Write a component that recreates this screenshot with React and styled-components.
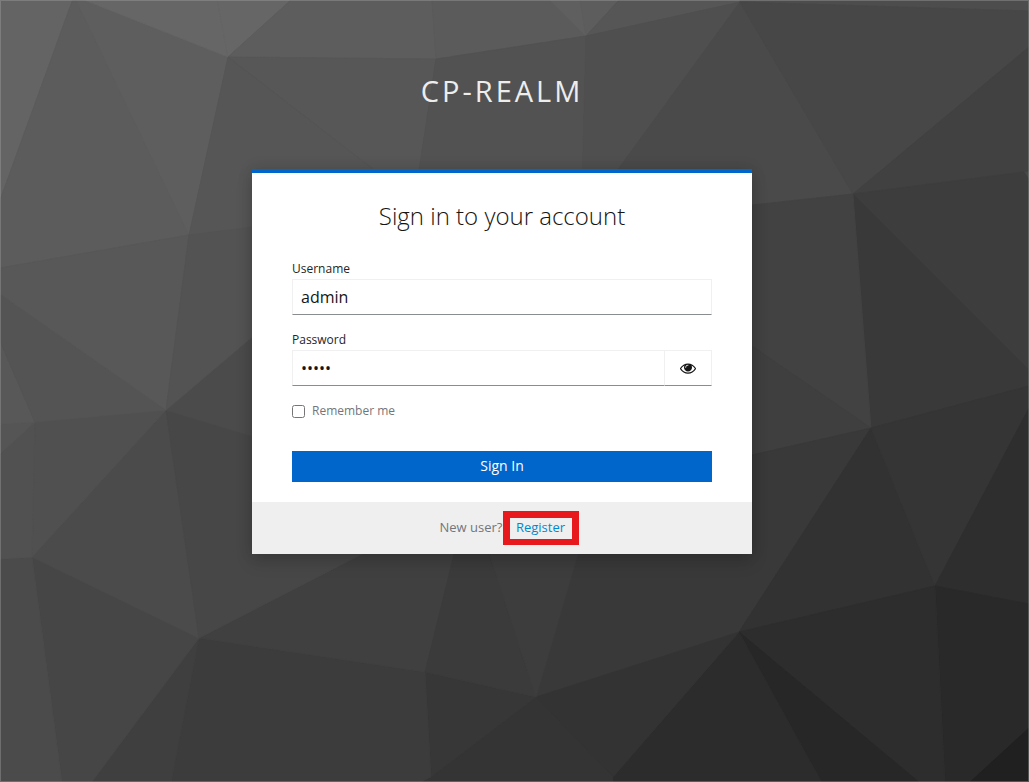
import React from "react";
import styled, { createGlobalStyle } from "styled-components";

const GlobalStyle = createGlobalStyle`
  *, *::before, *::after { box-sizing: border-box; }
  body { margin: 0; font-family: "Open Sans", Arial, sans-serif; }
`;

/* Facets of the low-poly backdrop: [fill, points] */
const FACETS = [
  ["#646464", "0,0 74,-4 0,200"],
  ["#5c5c5c", "74,-4 189,235 0,268 0,200"],
  ["#5e5e5e", "74,-4 228,57 189,235"],
  ["#666666", "74,-4 228,57 217,-1"],
  ["#666666", "217,-1 228,57 292,-1"],
  ["#5d5d5d", "228,57 292,-1 432,-1 436,59"],
  ["#575757", "228,57 436,59 419,170 419,190 400,190"],
  ["#565656", "228,57 400,190 252,228 189,235"],
  ["#5b5b5b", "436,59 432,-1 549,-1 586,36"],
  ["#5f5f5f", "549,-1 580,-1 586,36"],
  ["#5d5d5d", "580,-1 620,-1 586,36"],
  ["#565656", "586,36 620,-1 740,-1 740,2"],
  ["#525252", "436,59 586,36 582,190 416,190"],
  ["#4f4f4f", "586,36 740,2 603,190 582,190"],
  ["#4a4a4a", "740,2 853,194 752,205 590,216 603,190"],
  ["#4d4d4d", "740,-1 1029,-1 1029,11 740,2"],
  ["#474747", "740,2 1029,11 1029,47 853,194"],
  ["#414141", "853,194 1029,47 1029,171"],
  ["#3d3d3d", "853,194 1024,172 1029,180 1029,370"],
  ["#393939", "853,194 1029,370 1029,386 871,428"],
  ["#424242", "752,205 853,194 871,428 752,346"],
  ["#3f3f3f", "752,346 871,428 752,455"],
  ["#393939", "752,455 871,428 739,632 536,697 578,550 752,550"],
  ["#323232", "871,428 935,586 739,632"],
  ["#353535", "871,428 1029,386 1029,408 935,586"],
  ["#2e2e2e", "935,586 1029,408 1029,604"],
  ["#292929", "935,586 1029,604 1029,728 969,783 945,783"],
  ["#202020", "1029,728 1029,783 969,783"],
  ["#2d2d2d", "739,632 935,586 945,783 920,783"],
  ["#272727", "739,632 920,783 822,783"],
  ["#2c2c2c", "739,632 822,783 613,783 613,777"],
  ["#333333", "536,697 739,632 613,777"],
  ["#343434", "536,697 613,777 613,783 420,783 431,777"],
  ["#373737", "425,672 536,697 431,777"],
  ["#3c3c3c", "199,638 425,672 431,777 417,783 171,783"],
  ["#3f3f3f", "199,638 171,783 91,783"],
  ["#464646", "32,557 199,638 91,783 62,783"],
  ["#4b4b4b", "0,559 32,557 62,783 0,783"],
  ["#404040", "199,638 370,550 455,550 425,672"],
  ["#3b3b3b", "425,672 455,550 488,550 536,697"],
  ["#3d3d3d", "488,550 579,550 536,697"],
  ["#4b4b4b", "166,410 199,638 32,557"],
  ["#474747", "166,410 252,436 370,550 199,638"],
  ["#4b4b4b", "166,410 252,337 252,436"],
  ["#505050", "166,410 32,557 35,422"],
  ["#515151", "35,422 32,557 0,559 0,454"],
  ["#555555", "35,422 0,454 0,424"],
  ["#585858", "35,422 0,424 0,341"],
  ["#545454", "35,422 0,341 0,294 166,410"],
  ["#585858", "0,268 189,235 166,410 0,294"],
  ["#535353", "189,235 252,227 252,337 166,410"],
];

const Page = styled.div`
  position: relative;
  width: 1029px;
  height: 782px;
  overflow: hidden;
  background: #484848;
  isolation: isolate;

  &::after {
    content: "";
    position: absolute;
    inset: 0;
    border: 1px solid rgba(160, 160, 160, 0.42);
    pointer-events: none;
  }
`;

const Backdrop = styled.svg`
  position: absolute;
  inset: 0;
  z-index: -1;
`;

const Login = styled.div`
  width: 500px;
  margin-left: 252px;
`;

const Realm = styled.header`
  height: 169px;
  padding: 70px 0 0;
  color: #ededed;
  font-size: 29px;
  line-height: 42px;
  letter-spacing: 3px;
  text-align: center;
  text-transform: uppercase;
  white-space: nowrap;
`;

const Card = styled.main`
  height: 385px;
  display: flex;
  flex-direction: column;
  background: #fff;
  border-top: 4px solid #0066cc;
  box-shadow: 0 8px 16px 0 rgba(3, 3, 3, 0.14), 0 0 14px 0 rgba(3, 3, 3, 0.12);
`;

const Title = styled.h1`
  margin: 0;
  padding-top: 26px;
  height: 87px;
  color: #151515;
  font-size: 24px;
  font-weight: 300;
  line-height: 33px;
  text-align: center;
`;

const Form = styled.form`
  flex: 1;
  display: flex;
  flex-direction: column;
  padding: 0 40px;
`;

const Field = styled.div`
  height: 71px;
`;

const Label = styled.label`
  display: block;
  height: 19px;
  color: #252525;
  font-size: 12px;
  line-height: 18px;
`;

const InputGroup = styled.div`
  display: flex;
  height: 36px;
`;

const Input = styled.input`
  flex: 1;
  min-width: 0;
  height: 36px;
  padding: 0 8px;
  border: 1px solid #f0f0f0;
  border-bottom-color: #8a8d90;
  border-radius: 0;
  outline: none;
  background: #fff;
  color: #151515;
  font: 16px/24px "Open Sans", Arial, sans-serif;
`;

const RevealButton = styled.button`
  display: flex;
  align-items: center;
  justify-content: center;
  width: 47px;
  height: 36px;
  padding: 0;
  border: 1px solid #f0f0f0;
  border-left: 0;
  border-bottom-color: #8a8d90;
  background: #fff;
  color: #151515;
`;

const Remember = styled.label`
  display: flex;
  align-items: center;
  height: 16px;
  padding-top: 2px;
  color: #72767b;
  font-size: 12px;
  line-height: 16px;
`;

const Checkbox = styled.input`
  width: 13px;
  height: 13px;
  margin: 0 7px 0 0;
`;

const SubmitButton = styled.button`
  height: 31px;
  margin-top: 33px;
  padding: 0 0 2px;
  border: 0;
  background: #0066cc;
  color: #fff;
  font: 14px/21px "Open Sans", Arial, sans-serif;
`;

const Footer = styled.footer`
  display: flex;
  height: 52px;
  padding: 9px 0 0 187.5px;
  background: #efefef;
  color: #72767b;
  font-size: 13px;
  line-height: 33px;
  white-space: nowrap;
`;

const Prompt = styled.span`
  width: 63.5px;
`;

const RegisterLink = styled.a`
  display: flex;
  align-items: center;
  justify-content: center;
  width: 76px;
  height: 34px;
  padding: 0 1px 3px 0;
  border: 7px solid #e8191c;
  border-bottom-width: 6px;
  color: #0088ce;
  line-height: 18px;
  text-decoration: none;
`;

function EyeIcon() {
  return (
    <svg width="16" height="16" viewBox="0 0 1792 1792" fill="currentColor" aria-hidden="true">
      <path d="M1664 960q-152-236-381-353 61 104 61 225 0 185-131.5 316.5t-316.5 131.5-316.5-131.5-131.5-316.5q0-121 61-225-229 117-381 353 133 205 333.5 326.5t434.5 121.5 434.5-121.5 333.5-326.5zm-720-384q0-20-14-34t-34-14q-125 0-214.5 89.5t-89.5 214.5q0 20 14 34t34 14 34-14 14-34q0-86 61-147t147-61q20 0 34-14t14-34zm848 384q0 34-20 69-140 230-376.5 368.5t-499.5 138.5-499.5-139-376.5-368q-20-35-20-69t20-69q140-229 376.5-368t499.5-139 499.5 139 376.5 368q20 35 20 69z" />
    </svg>
  );
}

export default function App() {
  return (
    <Page>
      <GlobalStyle />
      <Backdrop width="1029" height="782" viewBox="0 0 1029 782" aria-hidden="true">
        {FACETS.map(([fill, points], i) => (
          <polygon key={i} points={points} fill={fill} stroke={fill} strokeWidth="0.8" />
        ))}
      </Backdrop>
      <Login>
        <Realm>CP-Realm</Realm>
        <Card>
          <Title>Sign in to your account</Title>
          <Form onSubmit={(e) => e.preventDefault()}>
            <Field>
              <Label htmlFor="username">Username</Label>
              <InputGroup>
                <Input id="username" type="text" defaultValue="admin" />
              </InputGroup>
            </Field>
            <Field>
              <Label htmlFor="password">Password</Label>
              <InputGroup>
                <Input id="password" type="password" defaultValue="admin" />
                <RevealButton type="button" aria-label="Show password">
                  <EyeIcon />
                </RevealButton>
              </InputGroup>
            </Field>
            <Remember>
              <Checkbox type="checkbox" />
              Remember me
            </Remember>
            <SubmitButton type="submit">Sign In</SubmitButton>
          </Form>
          <Footer>
            <Prompt>New user?</Prompt>
            <RegisterLink href="#">Register</RegisterLink>
          </Footer>
        </Card>
      </Login>
    </Page>
  );
}
